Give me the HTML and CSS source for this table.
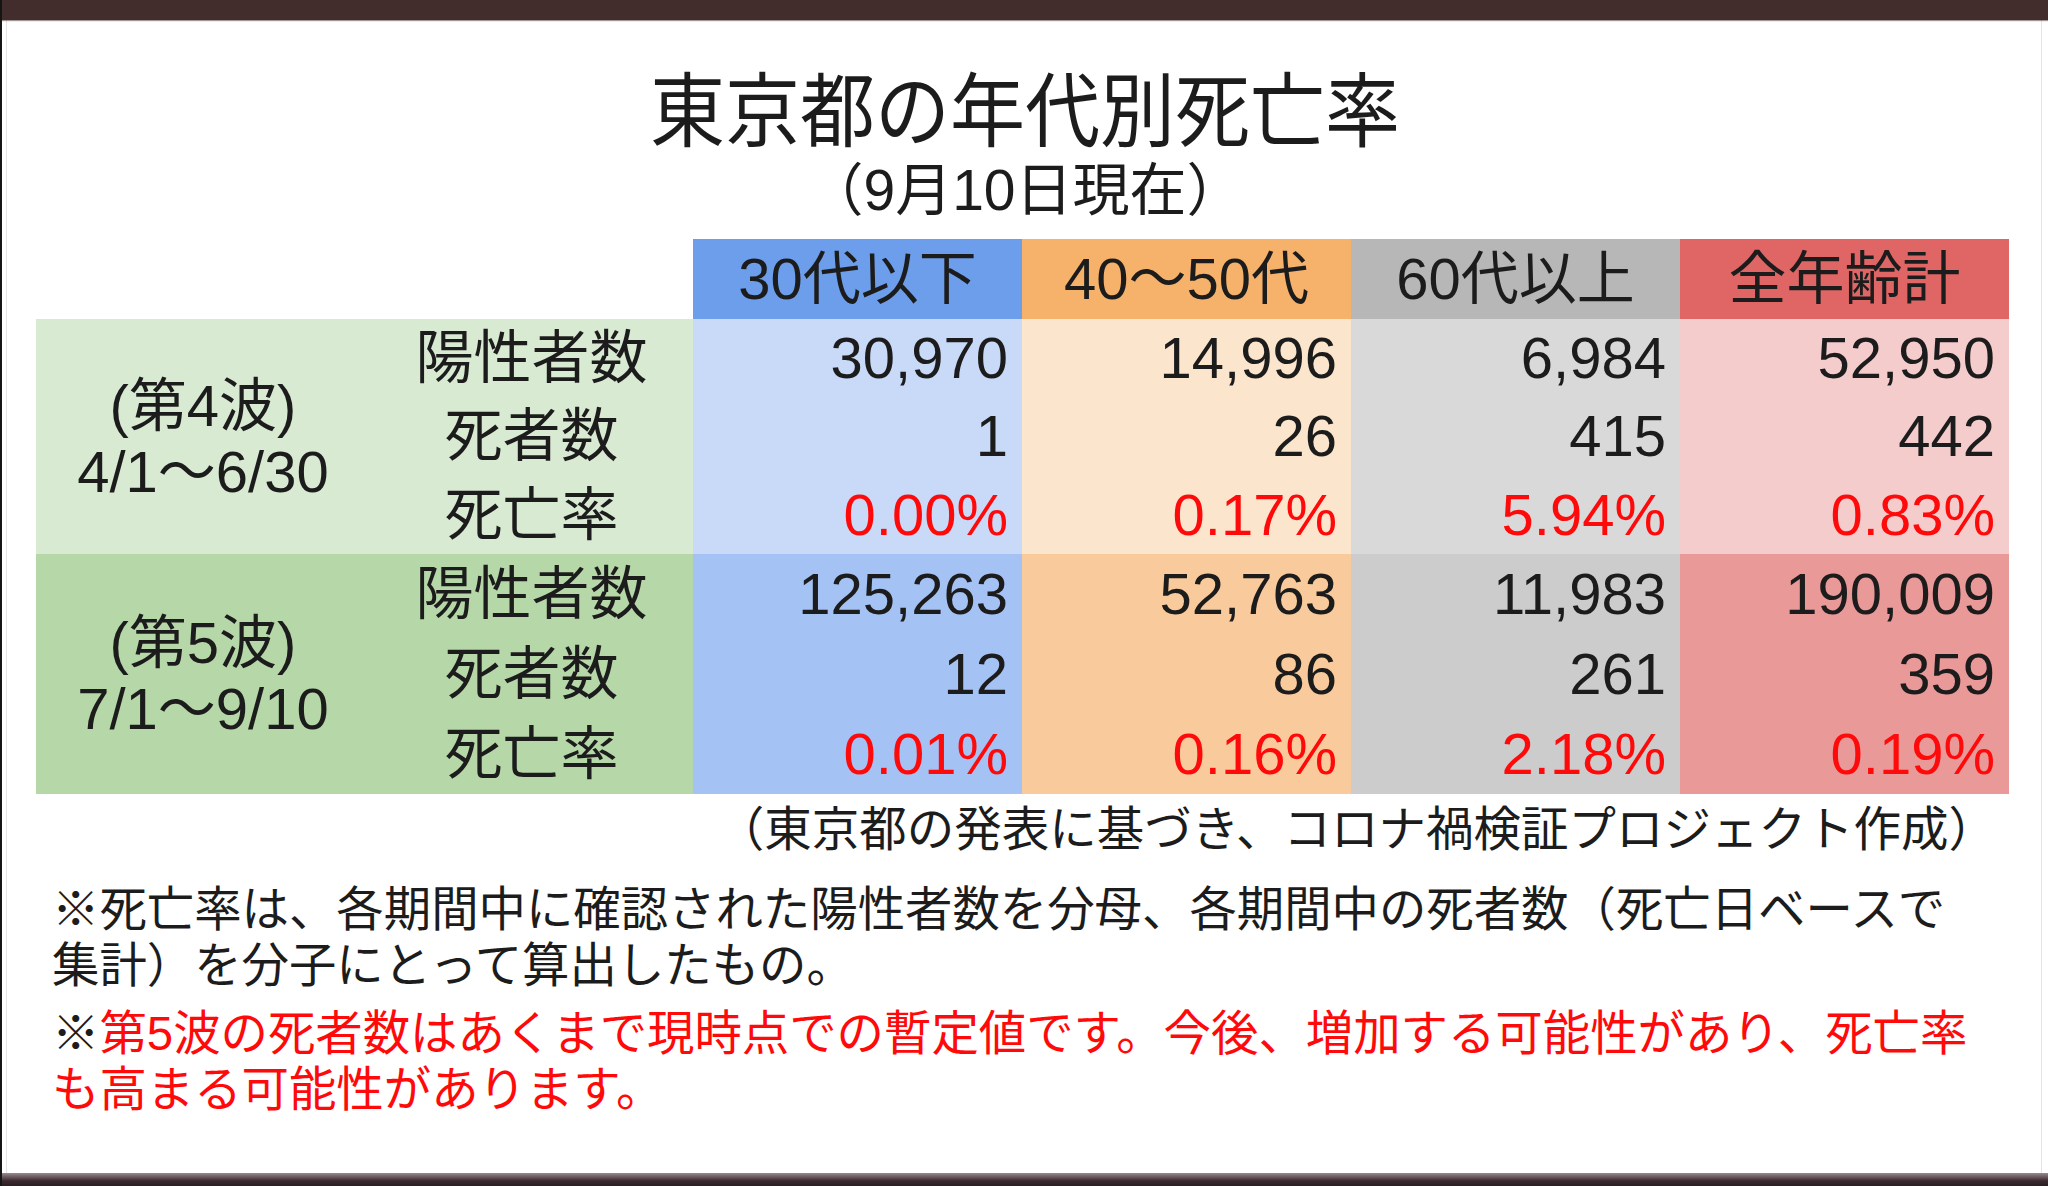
FILE: index.html
```html
<!DOCTYPE html>
<html lang="ja">
<head>
<meta charset="utf-8">
<title>東京都の年代別死亡率</title>
<link rel="stylesheet" href="styles.css">
</head>
<body>
<div class="page">
  <div class="topbar"></div>
  <main class="content">
    <h1 class="title">東京都の年代別死亡率</h1>
    <p class="subtitle">（9月10日現在）</p>

    <div class="grid">
      <div class="corner"></div>
      <div class="hd c-blue">30代以下</div>
      <div class="hd c-orange">40～50代</div>
      <div class="hd c-gray">60代以上</div>
      <div class="hd c-red">全年齢計</div>

      <div class="wave w4 r4">(第4波)<br>4/1～6/30</div>
      <div class="lbl w4">陽性者数</div>
      <div class="num b4">30,970</div>
      <div class="num o4">14,996</div>
      <div class="num g4">6,984</div>
      <div class="num k4">52,950</div>
      <div class="lbl w4">死者数</div>
      <div class="num b4">1</div>
      <div class="num o4">26</div>
      <div class="num g4">415</div>
      <div class="num k4">442</div>
      <div class="lbl w4">死亡率</div>
      <div class="num rate b4">0.00%</div>
      <div class="num rate o4">0.17%</div>
      <div class="num rate g4">5.94%</div>
      <div class="num rate k4">0.83%</div>

      <div class="wave w5 r5">(第5波)<br>7/1～9/10</div>
      <div class="lbl w5">陽性者数</div>
      <div class="num b5">125,263</div>
      <div class="num o5">52,763</div>
      <div class="num g5">11,983</div>
      <div class="num k5">190,009</div>
      <div class="lbl w5">死者数</div>
      <div class="num b5">12</div>
      <div class="num o5">86</div>
      <div class="num g5">261</div>
      <div class="num k5">359</div>
      <div class="lbl w5">死亡率</div>
      <div class="num rate b5">0.01%</div>
      <div class="num rate o5">0.16%</div>
      <div class="num rate g5">2.18%</div>
      <div class="num rate k5">0.19%</div>
    </div>

    <p class="source">（東京都の発表に基づき、コロナ禍検証プロジェクト作成）</p>

    <p class="note">※死亡率は、各期間中に確認された陽性者数を分母、各期間中の死者数（死亡日ベースで<br>集計）を分子にとって算出したもの。</p>
    <p class="note note-red">※<span class="red">第5波の死者数はあくまで現時点での暫定値です。今後、増加する可能性があり、死亡率<br>も高まる可能性があります。</span></p>
  </main>
  <div class="bottombar"></div>
</div>
</body>
</html>
```

FILE: styles.css
```css
* { box-sizing: border-box; }

html, body {
  margin: 0;
  padding: 0;
  background: #ffffff;
}

body {
  font-family: "Liberation Sans", "Noto Sans CJK JP", sans-serif;
  color: #1c1c1c;
}

.page {
  width: 2048px;
  height: 1186px;
  display: flex;
  flex-direction: column;
  border-left: 2px solid #151515;
  box-shadow: inset 4px 0 0 #ffffff, inset 5px 0 0 #e4e4e4,
              inset -6px 0 0 #ffffff, inset -7px 0 0 #e4e4e4;
  overflow: hidden;
}

.topbar {
  height: 20px;
  flex: none;
  background: #432c2c;
  box-shadow: 0 1px 1px rgba(67, 44, 44, 0.5);
}

.content {
  flex: 1;
  display: flex;
  flex-direction: column;
}

.title {
  margin: 54px 0 0;
  font-size: 75px;
  line-height: 76px;
  font-weight: 400;
  text-align: center;
  transform: scaleY(1.08);
}

.subtitle {
  margin: 12px 0 0;
  font-size: 57px;
  line-height: 56px;
  text-align: center;
}

.grid {
  margin: 21px 0 0 34px;
  display: grid;
  grid-template-columns: 334px 323px repeat(4, 329px);
  grid-template-rows: 80px 78px 78px 79px 80px 80px 80px;
  font-size: 58px;
  line-height: 1;
}

.corner { grid-column: span 2; }

.hd {
  display: flex;
  align-items: center;
  justify-content: center;
}

.c-blue { background: #6d9eeb; }
.c-orange { background: #f6b26b; }
.c-gray { background: #b7b7b7; }
.c-red { background: #e06666; }

.wave {
  display: flex;
  align-items: center;
  justify-content: center;
  text-align: center;
  line-height: 66px;
  padding-top: 4px;
}

.r4, .r5 { grid-row: span 3; }

.w4 { background: #d9ead3; }
.w5 { background: #b6d7a8; }

.lbl {
  display: flex;
  align-items: center;
  justify-content: center;
}

.num {
  display: flex;
  align-items: center;
  justify-content: flex-end;
  padding-right: 14px;
}

.rate { color: #ff0a0a; }

.b4 { background: #c9daf8; }
.o4 { background: #fce5cd; }
.g4 { background: #d9d9d9; }
.k4 { background: #f4cccc; }
.b5 { background: #a4c2f4; }
.o5 { background: #f9cb9c; }
.g5 { background: #cccccc; }
.k5 { background: #ea9999; }

.source {
  margin: 8px 0 0;
  padding-right: 52px;
  text-align: right;
  font-size: 47.5px;
  line-height: 56px;
  white-space: nowrap;
}

.note {
  margin: 24px 0 0;
  padding-left: 50px;
  font-size: 47.4px;
  line-height: 56px;
  white-space: nowrap;
}

.note-red { margin-top: 12px; }

.red { color: #ff0a0a; }

.bottombar {
  height: 13px;
  flex: none;
  background: linear-gradient(#9a8a8e, #3a2a30 60%, #2a1e22);
}
```
